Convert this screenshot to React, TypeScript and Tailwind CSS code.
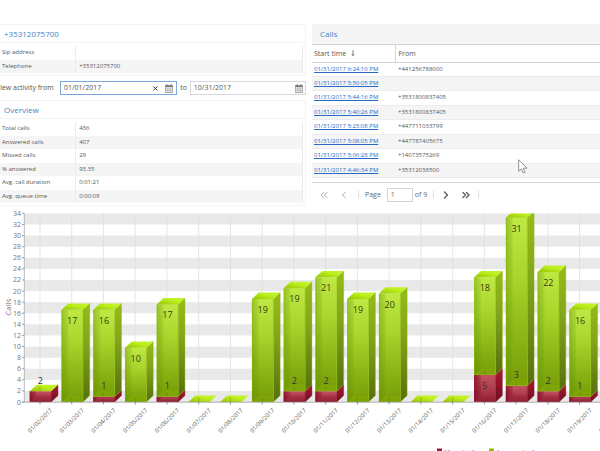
import type { ReactNode } from "react";
import { ChevronLeft, ChevronRight, ChevronsLeft, ChevronsRight, MoveDown, X } from "lucide-react";

type Row = [label: string, value: string];

type DayStats = {
  date: string;
  missed: number;
  answered: number;
};

const contactRows: Row[] = [
  ["Sip address", ""],
  ["Telephone", "+35312075700"],
];

const overviewRows: Row[] = [
  ["Total calls", "436"],
  ["Answered calls", "407"],
  ["Missed calls", "29"],
  ["% answered", "93.35"],
  ["Avg. call duration", "0:01:21"],
  ["Avg. queue time", "0:00:09"],
];

const calls: Row[] = [
  ["01/31/2017 6:24:10 PM", "+441256788000"],
  ["01/31/2017 5:50:05 PM", ""],
  ["01/31/2017 5:44:16 PM", "+3531800837405"],
  ["01/31/2017 5:40:26 PM", "+3531800837405"],
  ["01/31/2017 5:23:08 PM", "+447711033799"],
  ["01/31/2017 5:08:05 PM", "+447787405675"],
  ["01/31/2017 5:06:28 PM", "+14073575269"],
  ["01/31/2017 4:46:34 PM", "+35312038500"],
  ["01/31/2017 4:37:19 PM", "+353861808188"],
];

const days: DayStats[] = [
  { date: "01/02/2017", missed: 2, answered: 0 },
  { date: "01/03/2017", missed: 0, answered: 17 },
  { date: "01/04/2017", missed: 1, answered: 16 },
  { date: "01/05/2017", missed: 0, answered: 10 },
  { date: "01/06/2017", missed: 1, answered: 17 },
  { date: "01/07/2017", missed: 0, answered: 0 },
  { date: "01/08/2017", missed: 0, answered: 0 },
  { date: "01/09/2017", missed: 0, answered: 19 },
  { date: "01/10/2017", missed: 2, answered: 19 },
  { date: "01/11/2017", missed: 2, answered: 21 },
  { date: "01/12/2017", missed: 0, answered: 19 },
  { date: "01/13/2017", missed: 0, answered: 20 },
  { date: "01/14/2017", missed: 0, answered: 0 },
  { date: "01/15/2017", missed: 0, answered: 0 },
  { date: "01/16/2017", missed: 5, answered: 18 },
  { date: "01/17/2017", missed: 3, answered: 31 },
  { date: "01/18/2017", missed: 2, answered: 22 },
  { date: "01/19/2017", missed: 1, answered: 16 },
  { date: "01/20/2017", missed: 0, answered: 0 },
];

export default function App() {
  return (
    <main className="h-screen overflow-hidden bg-white pt-6 font-['Open_Sans','Noto_Sans',sans-serif] text-[6px] leading-[9px] text-[#555]">
      <div className="grid grid-cols-[minmax(0,306fr)_minmax(0,288fr)] gap-1.5">
        <div>
          <Panel title="+35312075700">
            <DetailTable rows={contactRows} className="h-[27px]" />
          </Panel>
          <ActivityFilter />
          <Panel title="Overview">
            <DetailTable rows={overviewRows} className="h-[81px]" />
          </Panel>
        </div>
        <CallsPanel />
      </div>
      <CallsChart />
    </main>
  );
}

function Panel({ title, children }: { title: string; children: ReactNode }) {
  return (
    <section className="border border-l-0 border-[#f3f3f3] pb-0.5">
      <h2 className="border-b border-[#f3f3f3] pl-1 text-[8px] leading-[17px] text-[#3d85cc]">{title}</h2>
      <div className="pt-[3px] pr-0.5">{children}</div>
    </section>
  );
}

function DetailTable({ rows, className }: { rows: Row[]; className: string }) {
  return (
    <table className={`w-full table-fixed border-r border-[#ececec] text-left ${className}`}>
      <tbody>
        {rows.map(([label, value]) => (
          <tr key={label} className="even:bg-[#f5f5f5]">
            <th scope="row" className="w-1/4 border-r border-[#ececec] py-0 pl-0.5 font-normal">
              {label}
            </th>
            <td className="py-0 pl-[3px]">{value}</td>
          </tr>
        ))}
      </tbody>
    </table>
  );
}

function ActivityFilter() {
  return (
    <form className="flex items-center py-[5px] text-[7px] leading-3 whitespace-nowrap">
      <label htmlFor="from" className="-ml-1 w-16 shrink-0">
        View activity from
      </label>
      <div className="flex h-[14px] flex-1 items-center gap-1.5 border border-[#7ba6dc] px-[3px]">
        <input id="from" defaultValue="01/01/2017" className="w-0 min-w-0 flex-1 outline-none" />
        <button type="button" aria-label="Clear">
          <X className="size-[7px] text-[#222]" strokeWidth={3} />
        </button>
        <button type="button" aria-label="Pick start date">
          <CalendarIcon />
        </button>
      </div>
      <label htmlFor="to" className="px-[3px]">
        to
      </label>
      <div className="flex h-[14px] flex-1 items-center border border-[#d9d9d9] pr-0.5 pl-[3px]">
        <input id="to" defaultValue="10/31/2017" className="w-0 min-w-0 flex-1 outline-none" />
        <button type="button" aria-label="Pick end date">
          <CalendarIcon />
        </button>
      </div>
    </form>
  );
}

function CalendarIcon() {
  return (
    <svg viewBox="0 0 24 26" className="h-[9px] w-2" aria-hidden="true">
      <path d="M1 4h22v21H1z" fill="#fff" stroke="#777" strokeWidth="2" />
      <path d="M1 4h22v5H1z" fill="#777" />
      <path d="M6 0v6M18 0v6" stroke="#777" strokeWidth="3" />
      <path d="M2 14h20M2 19h20M7 10v14M12 10v14M17 10v14" stroke="#999" strokeWidth="1.5" />
    </svg>
  );
}

function CallsPanel() {
  return (
    <section className="relative">
      <h2 className="bg-[#f5f5f5] pl-2 text-[8px] leading-5 text-[#3d85cc]">Calls</h2>
      <div className="h-[139px] overflow-hidden border-t border-b border-[#d4d4d4]">
        <table className="w-full table-fixed text-left">
          <thead className="text-[7px]">
            <tr className="h-[17px] border-b border-[#d4d4d4]">
              <th className="w-[83px] border-r border-[#d4d4d4] py-0 pl-0.5 font-normal">
                <span className="flex items-center gap-1">
                  Start time
                  <MoveDown className="h-2 w-1.5" strokeWidth={3} />
                </span>
              </th>
              <th className="py-0 pl-[3px] font-normal">From</th>
            </tr>
          </thead>
        </table>
        <table className="h-[130px] w-full table-fixed text-left">
          <tbody>
            {calls.map(([time, from]) => (
              <tr key={time} className="border-b border-[#ececec] even:bg-[#f5f5f5]">
                <td className="w-[83px] py-0 pl-0.5">
                  <a href="#call" className="text-[#2a6ac4] underline">
                    {time}
                  </a>
                </td>
                <td className="py-0 pl-[3px]">{from}</td>
              </tr>
            ))}
          </tbody>
        </table>
      </div>
      <Pager />
      <svg viewBox="0 0 10 15" className="absolute top-[135px] left-[206px] h-[15px] w-2.5" aria-hidden="true">
        <path
          d="M.7 .8V12.4L3.4 9.8L5.2 14L7 13.2L5.2 9.2H9.1Z"
          fill="#fff"
          stroke="#777"
          strokeWidth="0.8"
        />
      </svg>
    </section>
  );
}

function Pager() {
  return (
    <nav className="flex h-[23px] items-center text-[7px] text-[#666]">
      <button type="button" aria-label="First page" className="ml-1.5 text-[#aaa]">
        <ChevronsLeft className="size-3" />
      </button>
      <button type="button" aria-label="Previous page" className="ml-2 text-[#aaa]">
        <ChevronLeft className="size-3" />
      </button>
      <label htmlFor="page" className="ml-2 border-l border-[#ddd] pl-1.5 leading-[7px]">
        Page
      </label>
      <input
        id="page"
        defaultValue="1"
        className="mr-0.5 ml-1.5 h-[14px] w-[26px] border border-[#d4d4d4] pl-[3px] outline-none"
      />
      <span className="border-r border-[#ddd] pr-1.5 leading-[7px]">of 9</span>
      <button type="button" aria-label="Next page" className="ml-1.5">
        <ChevronRight className="size-3" strokeWidth={3} />
      </button>
      <button type="button" aria-label="Last page" className="ml-2">
        <ChevronsRight className="size-3" strokeWidth={3} />
      </button>
      <span className="ml-1.5 h-[7px] border-l border-[#ddd]" />
    </nav>
  );
}

const MAX = 34;
const PLOT_LEFT = 24.3;
const PLOT_TOP = 7.4;
const BASE = 196;
const STEP = 31.74;
const UNIT = 5.42;
const GRID_UNIT = (BASE - PLOT_TOP) / MAX;
const DEPTH_X = 6.8;
const DEPTH_Y = 6.4;

function CallsChart() {
  const ticks = Array.from({ length: MAX / 2 + 1 }, (_, i) => i * 2);

  return (
    <svg viewBox="0 0 600 250" className="block w-full" role="img" aria-label="Calls per day">
      <defs>
        <linearGradient id="greenFront" x1="0" y1="0" x2="0" y2="1">
          <stop offset="0" stopColor="#bfe843" />
          <stop offset="0.35" stopColor="#a9d52c" />
          <stop offset="1" stopColor="#759b05" />
        </linearGradient>
        <linearGradient id="greenSide" x1="0" y1="0" x2="0" y2="1">
          <stop offset="0" stopColor="#95bd17" />
          <stop offset="0.4" stopColor="#83a51a" />
          <stop offset="1" stopColor="#56700c" />
        </linearGradient>
        <linearGradient id="greenTop" x1="0" y1="1" x2="1" y2="0">
          <stop offset="0" stopColor="#94c400" />
          <stop offset="0.6" stopColor="#bdf01e" />
          <stop offset="1" stopColor="#c0f53a" />
        </linearGradient>
        <linearGradient id="redFront" x1="0" y1="0" x2="0" y2="1">
          <stop offset="0" stopColor="#c45361" />
          <stop offset="1" stopColor="#96253a" />
        </linearGradient>
        <linearGradient id="redSide" x1="0" y1="0" x2="0" y2="1">
          <stop offset="0" stopColor="#ad1832" />
          <stop offset="1" stopColor="#6d1020" />
        </linearGradient>
        <linearGradient id="shade" x1="0" y1="0" x2="1" y2="0">
          <stop offset="0" stopColor="#5f8c00" stopOpacity="0.4" />
          <stop offset="1" stopColor="#5f8c00" stopOpacity="0.12" />
        </linearGradient>
        <linearGradient id="redShade" x1="0" y1="0" x2="1" y2="0">
          <stop offset="0" stopColor="#7a0018" stopOpacity="0.65" />
          <stop offset="1" stopColor="#7a0018" stopOpacity="0.2" />
        </linearGradient>
        <clipPath id="plot">
          <rect x="0" y={PLOT_TOP} width="620" height="240" />
        </clipPath>
      </defs>

      {ticks.slice(1).map((tick) =>
        tick % 4 === 2 ? (
          <rect
            key={tick}
            x={PLOT_LEFT}
            y={BASE - tick * GRID_UNIT}
            width="576"
            height={GRID_UNIT * 2}
            fill="#e9e9e9"
          />
        ) : null,
      )}
      {days.map((day, i) => (
        <path
          key={day.date}
          d={`M${40 + i * STEP} ${PLOT_TOP}V${BASE}`}
          stroke="#ddd"
          strokeOpacity="0.7"
          strokeWidth="1"
        />
      ))}
      <path d={`M${PLOT_LEFT} ${PLOT_TOP}V${BASE}`} stroke="#aaa" strokeWidth="0.8" />

      {ticks.map((tick) => (
        <g key={tick}>
          <path d={`M22 ${BASE - tick * GRID_UNIT}h2.3`} stroke="#888" strokeWidth="0.8" />
          <text x="21" y={BASE - tick * GRID_UNIT + 2.5} textAnchor="end" fontSize="7" fill="#777">
            {tick}
          </text>
        </g>
      ))}
      <text transform="translate(10.5 101) rotate(-90)" textAnchor="middle" fontSize="8" fill="#777">
        Calls
      </text>

      <g clipPath="url(#plot)">
        {days.map((day, i) => (
          <Bar key={day.date} day={day} center={40 + i * STEP} />
        ))}
      </g>
      <path d={`M${PLOT_LEFT - 2} ${BASE + 0.2}H600`} stroke="#999" strokeWidth="0.8" />

      {days.map((day, i) => (
        <g key={day.date}>
          <path d={`M${40 + i * STEP} ${BASE}v2.4`} stroke="#777" strokeWidth="0.8" />
          <text
            transform={`translate(${41.5 + i * STEP} 216) rotate(-45)`}
            textAnchor="middle"
            fontSize="6"
            fill="#666"
          >
            {day.date}
          </text>
        </g>
      ))}

      <rect x="437" y="242.5" width="5" height="5" fill="#a31d38" />
      <text x="444" y="247.5" fontSize="6" fill="#777">
        Missed calls
      </text>
      <rect x="489" y="242.5" width="5" height="5" fill="#8fb80a" />
      <text x="496" y="247.5" fontSize="6" fill="#777">
        Answered calls
      </text>
    </svg>
  );
}

function Bar({ day, center }: { day: DayStats; center: number }) {
  const left = center - 10.2;
  const right = center + 11.2;
  const missedTop = BASE - day.missed * UNIT;
  const top = missedTop - day.answered * UNIT;
  const missedLabelY = day.missed > 4 ? missedTop + 14 : missedTop - 7.4;

  return (
    <g>
      {day.missed > 0 && (
        <Block left={left} right={right} top={missedTop} bottom={BASE} front="url(#redFront)" side="url(#redSide)" shade="url(#redShade)" edge="#8c1029" />
      )}
      {day.answered > 0 && (
        <Block left={left} right={right} top={top} bottom={missedTop} front="url(#greenFront)" side="url(#greenSide)" shade="url(#shade)" edge="#8dbb00" />
      )}
      <path
        d={`M${left} ${top}L${left + DEPTH_X} ${top - DEPTH_Y}H${right + DEPTH_X}L${right} ${top}Z`}
        fill="url(#greenTop)"
      />
      <path d={`M${center} ${missedTop - 4.5}V${missedTop}`} stroke="#a3562c" strokeOpacity="0.6" strokeWidth="0.7" />
      {day.answered > 0 && (
        <text x={center + 0.5} y={top + 14} textAnchor="middle" fontSize="9" fill="#333d10">
          {day.answered}
        </text>
      )}
      {day.missed > 0 && (
        <text x={center + 0.3} y={missedLabelY} textAnchor="middle" fontSize="9" fill="#333">
          {day.missed}
        </text>
      )}
    </g>
  );
}

type BlockProps = {
  left: number;
  right: number;
  top: number;
  bottom: number;
  front: string;
  side: string;
  shade: string;
  edge: string;
};

function Block({ left, right, top, bottom, front, side, shade, edge }: BlockProps) {
  const height = bottom - top;
  const floor = Math.max(bottom - DEPTH_Y, top);

  return (
    <g>
      <path
        d={`M${right} ${top}l${DEPTH_X} ${-DEPTH_Y}v${height}L${right} ${bottom}Z`}
        fill={side}
        stroke={edge}
        strokeWidth="0.4"
      />
      <rect x={left} y={top} width={right - left} height={height} fill={front} />
      {/* back walls seen through the glassy front */}
      <path d={`M${left} ${top}H${left + DEPTH_X}V${floor}L${left} ${bottom}Z`} fill={shade} />
      <path
        d={`M${left} ${bottom}L${left + DEPTH_X} ${floor}H${right}V${bottom}Z`}
        fill={edge}
        fillOpacity="0.25"
      />
      <path d={`M${left + 0.3} ${top}V${bottom - 0.3}H${right}V${top}`} fill="none" stroke={edge} strokeOpacity="0.7" strokeWidth="0.6" />
    </g>
  );
}
